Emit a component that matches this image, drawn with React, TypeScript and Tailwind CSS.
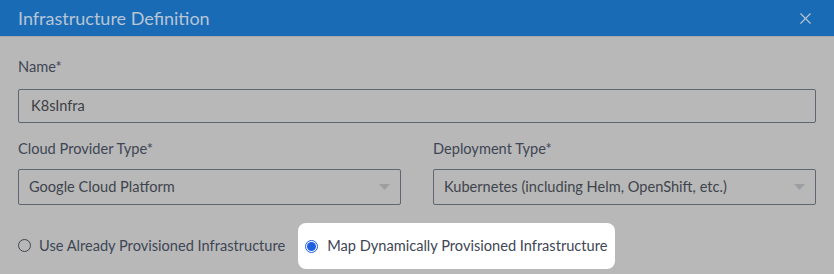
import { X } from "lucide-react";

const font = { fontFamily: "Lato, 'Noto Sans', sans-serif" };

function Caret() {
  return (
    <svg width="11" height="6" viewBox="0 0 11 6" className="shrink-0">
      <polygon points="0,0 11,0 5.5,6" fill="#9c9ea1" />
    </svg>
  );
}

function SelectBox({ value, className }: { value: string; className?: string }) {
  return (
    <div className={`h-[36px] border border-[#5f6670] rounded-[2px] flex items-center justify-between pl-[10px] pr-[10px] ${className ?? ""}`}>
      <span className="text-[14.6px] text-[#3f444c]">{value}</span>
      <Caret />
    </div>
  );
}

export default function App() {
  return (
    <div className="w-[834px] h-[274px] bg-[#b8b8b8] overflow-hidden" style={font}>
      {/* Header */}
      <div className="h-[37px] bg-[#1a6bb5] flex items-center justify-between pl-[18px] pr-[19px] border-b border-[#a9a9a9]">
        <span className="text-[18px] text-[#b7c5d6]">Infrastructure Definition</span>
        <X size={19} strokeWidth={1.4} className="text-[#b9c6d4]" />
      </div>

      <div className="px-[18px] pt-[20px]">
        {/* Name */}
        <div className="text-[14.6px] text-[#3e4655] leading-[20px]">Name*</div>
        <div className="mt-[12px] h-[34px] border border-[#5f6670] rounded-[2px] flex items-center pl-[12px]">
          <span className="text-[14.6px] text-[#3c3f45]">K8sInfra</span>
        </div>

        {/* Selects */}
        <div className="mt-[16px] grid grid-cols-2 gap-x-[30px]">
          <div>
            <div className="text-[14.6px] text-[#3e4655] leading-[20px]">Cloud Provider Type*</div>
            <SelectBox value="Google Cloud Platform" className="mt-[10px] mr-[1px]" />
          </div>
          <div>
            <div className="text-[14.6px] text-[#3e4655] leading-[20px] ml-[1px]">Deployment Type*</div>
            <SelectBox value="Kubernetes (including Helm, OpenShift, etc.)" className="mt-[10px] ml-[1px]" />
          </div>
        </div>

        {/* Radios */}
        <div className="mt-[18px] flex items-center">
          <label className="flex items-center gap-[8px]">
            <span className="w-[13px] h-[13px] rounded-full border border-[#3f444c]" />
            <span className="text-[14.6px] text-[#3e4655]">Use Already Provisioned Infrastructure</span>
          </label>
          <label className="ml-[13px] h-[46px] bg-white rounded-[8px] flex items-center gap-[9px] pl-[7px] pr-[8px]">
            <span className="w-[13px] h-[13px] rounded-full border border-[#1c5fe0] flex items-center justify-center">
              <span className="w-[9px] h-[9px] rounded-full bg-[#1c5fe0]" />
            </span>
            <span className="text-[14.6px] text-[#3e4655]">Map Dynamically Provisioned Infrastructure</span>
          </label>
        </div>
      </div>
    </div>
  );
}
